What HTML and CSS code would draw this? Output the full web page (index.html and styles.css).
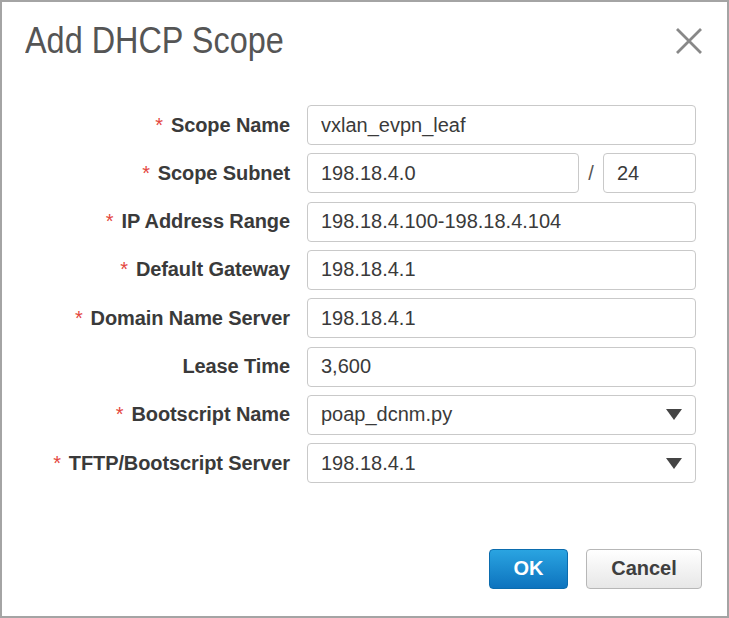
FILE: index.html
```html
<!DOCTYPE html>
<html>
<head>
<meta charset="utf-8">
<link rel="stylesheet" href="styles.css">
</head>
<body>
<div class="dialog">
  <div class="header">
    <h1 class="title">Add DHCP Scope</h1>
    <button class="close" aria-label="Close">
      <svg width="28" height="26" viewBox="0 0 28 26"><path d="M2 1 L26 25 M26 1 L2 25" stroke="#888" stroke-width="2.8" fill="none"/></svg>
    </button>
  </div>
  <form class="form">
    <label class="label"><span class="req">*</span>Scope Name</label>
    <input class="field" value="vxlan_evpn_leaf">

    <label class="label"><span class="req">*</span>Scope Subnet</label>
    <div class="subnet">
      <input class="field grow" value="198.18.4.0">
      <span class="slash">/</span>
      <input class="field prefix" value="24">
    </div>

    <label class="label"><span class="req">*</span>IP Address Range</label>
    <input class="field" value="198.18.4.100-198.18.4.104">

    <label class="label"><span class="req">*</span>Default Gateway</label>
    <input class="field" value="198.18.4.1">

    <label class="label"><span class="req">*</span>Domain Name Server</label>
    <input class="field" value="198.18.4.1">

    <label class="label">Lease Time</label>
    <input class="field" value="3,600">

    <label class="label"><span class="req">*</span>Bootscript Name</label>
    <div class="field select"><span>poap_dcnm.py</span><svg class="caret" width="16" height="11" viewBox="0 0 16 11"><path d="M0 0 H16 L8 11 Z" fill="#444"/></svg></div>

    <label class="label"><span class="req">*</span>TFTP/Bootscript Server</label>
    <div class="field select"><span>198.18.4.1</span><svg class="caret" width="16" height="11" viewBox="0 0 16 11"><path d="M0 0 H16 L8 11 Z" fill="#444"/></svg></div>
  </form>
  <div class="footer">
    <button class="btn ok">OK</button>
    <button class="btn cancel">Cancel</button>
  </div>
</div>
</body>
</html>
```

FILE: styles.css
```css
html, body {
  margin: 0;
  padding: 0;
  background: #fff;
}

.dialog {
  width: 729px;
  height: 618px;
  box-sizing: border-box;
  border: 2px solid #a4a4a4;
  background: #fff;
  font-family: "Liberation Sans", Arial, sans-serif;
  display: flex;
  flex-direction: column;
}

.header {
  display: flex;
  justify-content: space-between;
  align-items: flex-start;
  padding: 19px 24px 0 23px;
}

.title {
  margin: 0;
  font-size: 36px;
  line-height: 40px;
  font-weight: normal;
  color: #555;
  transform: scaleX(0.9);
  transform-origin: left center;
  white-space: nowrap;
}

.close {
  border: 0;
  background: none;
  padding: 0;
  margin-top: 7px;
  margin-right: 0;
  cursor: pointer;
  line-height: 0;
}

.form {
  display: grid;
  grid-template-columns: 1fr 389px;
  grid-auto-rows: 40px;
  column-gap: 17px;
  row-gap: 8.33px;
  padding-right: 31px;
  margin-top: 44px;
}

.label {
  justify-self: end;
  align-self: center;
  font-size: 20px;
  font-weight: bold;
  color: #3a3a3a;
  white-space: nowrap;
  letter-spacing: -0.1px;
}

.req {
  color: #e4463e;
  font-weight: normal;
  margin-right: 8px;
}

.field {
  box-sizing: border-box;
  height: 40px;
  width: 100%;
  border: 1px solid #c9c9c9;
  border-radius: 4px;
  padding: 0 13px;
  font-family: "Liberation Sans", Arial, sans-serif;
  font-size: 20px;
  color: #3a3a3a;
  background: #fff;
  outline: none;
}

.subnet {
  display: flex;
  align-items: center;
}

.grow {
  flex: 1;
  width: auto;
  min-width: 0;
}

.slash {
  width: 24px;
  text-align: center;
  font-size: 20px;
  color: #555;
}

.prefix {
  width: 93px;
  flex: none;
}

.select {
  display: flex;
  align-items: center;
  justify-content: space-between;
  padding-right: 13px;
}

.caret {
  display: block;
}

.footer {
  display: flex;
  justify-content: flex-end;
  gap: 18px;
  padding-right: 25px;
  margin-top: 65.7px;
}

.btn {
  height: 40px;
  box-sizing: border-box;
  border-radius: 4px;
  font-family: "Liberation Sans", Arial, sans-serif;
  font-size: 20px;
  font-weight: bold;
  padding: 0;
  cursor: pointer;
}

.ok {
  width: 79px;
  color: #fff;
  border: 1px solid #0b6cae;
  background: linear-gradient(#2aa4e1, #0d73be);
}

.cancel {
  width: 116px;
  color: #3f3f3f;
  border: 1px solid #b7b7b7;
  background: linear-gradient(#ffffff, #e7e7e7);
}
```
